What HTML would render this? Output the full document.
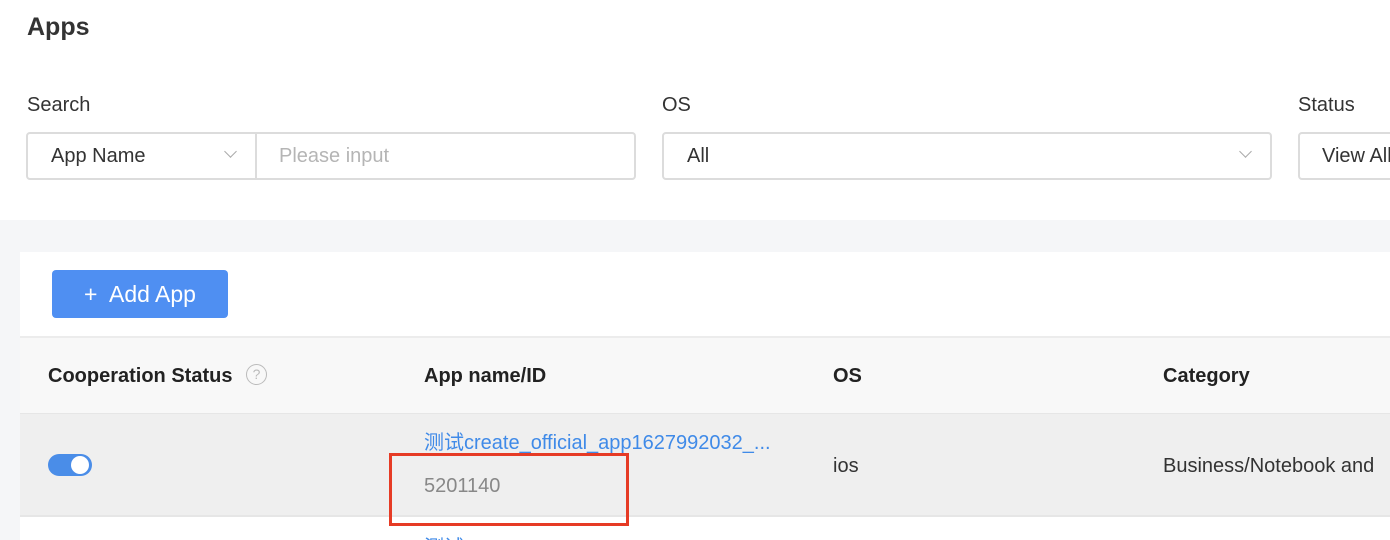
<!DOCTYPE html>
<html><head><meta charset="utf-8"><style>
*{box-sizing:border-box;margin:0;padding:0}
html,body{width:1390px;height:540px;overflow:hidden}
body{background:#fff;font-family:"Liberation Sans","Noto Sans CJK SC",sans-serif;color:#222;position:relative;font-size:20px}
.a{position:absolute;white-space:nowrap}
.box{position:absolute;border:2px solid #dcdcdc;border-radius:4px;background:#fff}
.chev{position:absolute;width:9px;height:9px;border-right:1.5px solid #aaa;border-bottom:1.5px solid #aaa;transform:rotate(45deg)}
</style></head><body>
<div class="a" style="left:27px;top:13px;font-size:25px;font-weight:bold;color:#333">Apps</div>
<div class="a" style="left:27px;top:94px;color:#333">Search</div>
<div class="a" style="left:662px;top:94px;color:#333">OS</div>
<div class="a" style="left:1298px;top:94px;color:#333">Status</div>
<div class="box" style="left:26px;top:132px;width:610px;height:48px"></div>
<div class="a" style="left:255px;top:132px;width:2px;height:48px;background:#dcdcdc"></div>
<div class="a" style="left:51px;top:145px;color:#333">App Name</div>
<div class="chev" style="left:226px;top:147px"></div>
<div class="a" style="left:279px;top:145px;color:#b5b5b5">Please input</div>
<div class="box" style="left:662px;top:132px;width:610px;height:48px"></div>
<div class="a" style="left:687px;top:145px;color:#333">All</div>
<div class="chev" style="left:1241px;top:147px"></div>
<div class="box" style="left:1298px;top:132px;width:120px;height:48px"></div>
<div class="a" style="left:1322px;top:145px;color:#333">View All</div>
<div class="a" style="left:0;top:220px;width:1390px;height:320px;background:#f5f6f8"></div>
<div class="a" style="left:20px;top:252px;width:1370px;height:288px;background:#fff"></div>
<div class="a" style="left:52px;top:270px;width:176px;height:48px;background:#4f8ff2;border-radius:4px;color:#fff;font-size:23px;line-height:48px;text-align:center">+&nbsp; Add App</div>
<div class="a" style="left:20px;top:336px;width:1370px;height:77px;background:#f8f8f8;border-top:2px solid #ececec"></div>
<div class="a" style="left:48px;top:365px;font-weight:bold;color:#222">Cooperation Status</div>
<div class="a" style="left:246px;top:364px;width:21px;height:21px;border:1.5px solid #bbb;border-radius:50%;color:#bbb;font-size:14px;text-align:center;line-height:18px">?</div>
<div class="a" style="left:424px;top:365px;font-weight:bold">App name/ID</div>
<div class="a" style="left:833px;top:365px;font-weight:bold">OS</div>
<div class="a" style="left:1163px;top:365px;font-weight:bold">Category</div>
<div class="a" style="left:20px;top:413px;width:1370px;height:104px;background:#efefef;border-top:1px solid #e6e6e6;border-bottom:2px solid #e6e6e6"></div>
<div class="a" style="left:48px;top:454px;width:44px;height:22px;background:#4a8de8;border-radius:11px"></div>
<div class="a" style="left:71px;top:456px;width:18px;height:18px;background:#fff;border-radius:50%"></div>
<div class="a" style="left:424px;top:426px;color:#3f8ae8">测试create_official_app1627992032_...</div>
<div class="a" style="left:424px;top:475px;color:#888">5201140</div>
<div class="a" style="left:833px;top:455px;color:#333">ios</div>
<div class="a" style="left:1163px;top:455px;color:#333">Business/Notebook and</div>
<div class="a" style="left:424px;top:531px;color:#3f8ae8">测试</div>
<div class="a" style="left:389px;top:453px;width:240px;height:73px;border:3px solid #e63b25"></div>
</body></html>
